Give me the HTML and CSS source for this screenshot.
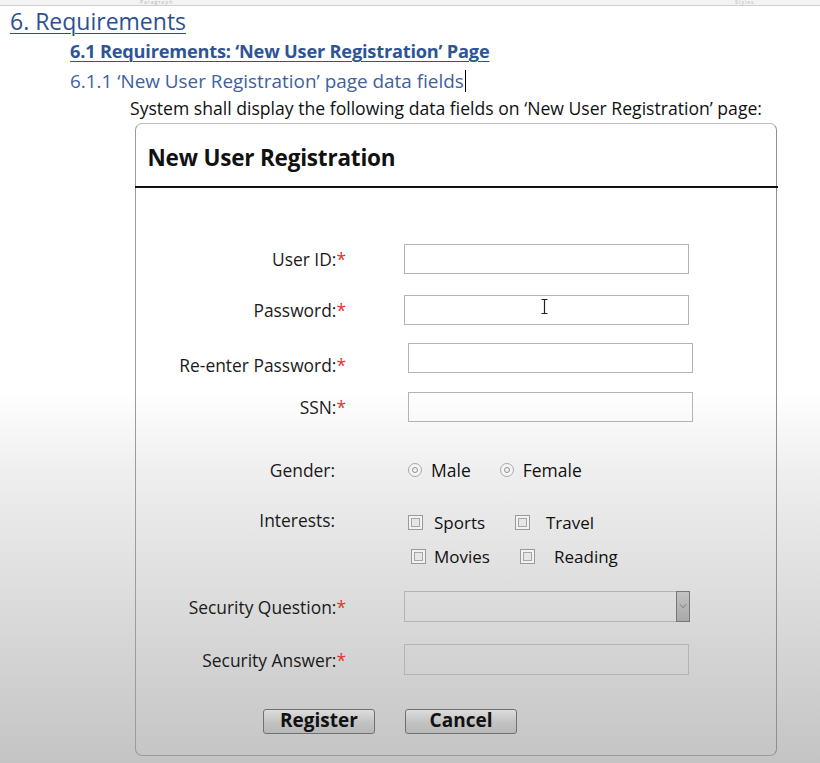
FILE: index.html
```html
<!DOCTYPE html>
<html>
<head>
<meta charset="utf-8">
<link rel="stylesheet" href="styles.css">
</head>
<body>
<div class="ribbon"><span class="rib-a">Paragraph</span><span class="rib-b">Styles</span></div>
<div class="doc">
  <h1 class="h1">6. Requirements</h1>
  <h2 class="h2">6.1 Requirements: ‘New User Registration’ Page</h2>
  <h3 class="h3">6.1.1 ‘New User Registration’ page data fields<span class="caret"></span></h3>
  <p class="para">System shall display the following data fields on ‘New User Registration’ page:</p>

  <div class="dialog">
    <div class="dlg-head">New User Registration</div>
    <div class="dlg-body">
      <div class="row r1">
        <div class="label">User ID:<span class="req">*</span></div>
        <div class="field"></div>
      </div>
      <div class="row r2">
        <div class="label">Password:<span class="req">*</span></div>
        <div class="field has-cursor">
          <svg class="ibeam" width="9" height="17" viewBox="0 0 9 17"><path d="M1.5 1.5h6M4.5 1.5v14M1.5 15.5h6" stroke="#222" stroke-width="1.2" fill="none"/></svg>
        </div>
      </div>
      <div class="row r3">
        <div class="label low">Re-enter Password:<span class="req">*</span></div>
        <div class="field shift"></div>
      </div>
      <div class="row r4">
        <div class="label">SSN:<span class="req">*</span></div>
        <div class="field shift"></div>
      </div>
      <div class="row r5">
        <div class="label opt">Gender:</div>
        <div class="options">
          <span class="opt-item"><span class="radio"></span>Male</span>
          <span class="opt-item f"><span class="radio"></span>Female</span>
        </div>
      </div>
      <div class="row-top r6">
        <div class="label opt">Interests:</div>
        <div class="checks">
          <span class="chk c1"><span class="box"></span><span class="t">Sports</span></span>
          <span class="chk c2"><span class="box"></span><span class="t">Travel</span></span>
          <span class="chk c3"><span class="box"></span><span class="t">Movies</span></span>
          <span class="chk c4"><span class="box"></span><span class="t">Reading</span></span>
        </div>
      </div>
      <div class="row r7">
        <div class="label">Security Question:<span class="req">*</span></div>
        <div class="field select"><span class="sel-btn"><svg width="9" height="6" viewBox="0 0 9 6"><path d="M1 1l3.5 4 3.5-4" stroke="#777" stroke-width="1" fill="none"/></svg></span></div>
      </div>
      <div class="row r8">
        <div class="label">Security Answer:<span class="req">*</span></div>
        <div class="field"></div>
      </div>
      <div class="buttons">
        <span class="btn reg">Register</span>
        <span class="btn">Cancel</span>
      </div>
    </div>
  </div>
</div>
</body>
</html>
```

FILE: styles.css
```css
html, body {
  margin: 0;
  padding: 0;
}
body {
  width: 820px;
  height: 763px;
  overflow: hidden;
  font-family: "Open Sans", Lato, sans-serif;
  background: linear-gradient(to bottom, #ffffff 0px, #ffffff 390px, #efefef 470px, #dcdcdc 600px, #c4c4c4 763px);
  color: #1e1e1e;
}
.ribbon {
  height: 5px;
  background: #f3f3f3;
  border-bottom: 1px solid #cfcfcf;
  position: relative;
  font-size: 5px;
  color: #b5b5b5;
  line-height: 5px;
}
.rib-a { position: absolute; left: 140px; top: 0; letter-spacing: 1px; }
.rib-b { position: absolute; left: 735px; top: 0; letter-spacing: 1px; }

.h1 {
  margin: 1px 0 0 10px;
  font-size: 23px;
  font-weight: 400;
  line-height: 28px;
  color: #2c5191;
  text-decoration: underline;
  text-decoration-thickness: 1px;
  text-underline-offset: 3px;
}
.h2 {
  margin: 4px 0 0 70px;
  font-size: 18.2px;
  font-weight: 700;
  line-height: 24px;
  color: #2f5496;
  text-decoration: underline;
  text-decoration-thickness: 1px;
  text-underline-offset: 3px;
  letter-spacing: -0.2px;
}
.h3 {
  margin: 6px 0 0 70px;
  font-size: 18.9px;
  font-weight: 400;
  line-height: 24px;
  color: #3e5fa0;
  display: flex;
  align-items: center;
}
.caret {
  display: inline-block;
  width: 1px;
  height: 22px;
  background: #000;
  margin-left: 1px;
}
.para {
  margin: 3px 0 0 130px;
  font-size: 17.6px;
  line-height: 24px;
  color: #111;
}

.dialog {
  margin: 3px 0 0 135px;
  width: 642px;
  height: 633px;
  border: 1.5px solid #9c9c9c;
  border-top-color: #bdbdbd;
  border-right-color: #8f8f8f;
  border-radius: 7px;
  box-sizing: border-box;
}
.dlg-head {
  height: 64px;
  box-sizing: border-box;
  padding: 20px 0 0 13px;
  font-size: 22.5px;
  font-weight: 700;
  line-height: 28px;
  color: #111;
  border-bottom: 2px solid #111;
  margin: 0 -1.5px;
  letter-spacing: -0.2px;
}
.dlg-body {
  padding-top: 56px;
  font-size: 17.4px;
  color: #1a1a1a;
}
.row {
  display: flex;
  align-items: center;
  height: 30px;
}
.row-top {
  display: flex;
  align-items: flex-start;
}
.label {
  width: 210px;
  text-align: right;
  flex-shrink: 0;
  white-space: nowrap;
}
.label.opt { padding-right: 11px; box-sizing: border-box; line-height: 24px; }
.label.low { position: relative; top: 7px; }
.req { color: #e4322f; }
.field {
  margin-left: 58px;
  width: 285px;
  height: 30px;
  box-sizing: border-box;
  border: 1.5px solid #b4b4b4;
  background: transparent;
  position: relative;
}
.field.shift { margin-left: 62px; }
.ibeam { position: absolute; left: 135px; top: 2px; }

.r2 { margin-top: 21px; }
.r3 { margin-top: 18px; }
.r4 { margin-top: 19px; }
.r5 { margin-top: 36px; height: 24px; }
.r6 { margin-top: 26px; }
.r7 { margin-top: 23px; height: 31px; }
.r7 .field { height: 31px; }
.r8 { margin-top: 22px; height: 31px; }
.r8 .field { height: 31px; }

.options {
  margin-left: 62px;
  display: flex;
  font-size: 17.5px;
  color: #111;
}
.opt-item { display: inline-flex; align-items: center; }
.opt-item.f { margin-left: 29px; }
.radio {
  width: 14px;
  height: 14px;
  box-sizing: border-box;
  border: 1.5px solid #a8a8a8;
  border-radius: 50%;
  margin-right: 9px;
  display: inline-flex;
  align-items: center;
  justify-content: center;
  background: #f4f4f4;
}
.radio::after {
  content: "";
  width: 6px;
  height: 6px;
  box-sizing: border-box;
  border: 1.5px solid #8e8e8e;
  border-radius: 50%;
}

.checks {
  margin-left: 62px;
  display: grid;
  grid-template-columns: 107px auto;
  row-gap: 12px;
  font-size: 17px;
  color: #111;
}
.chk { display: inline-flex; align-items: center; height: 24px; }
.chk .box {
  width: 15px;
  height: 15px;
  box-sizing: border-box;
  border: 1.5px solid #9a9a9a;
  background: #f2f2f2;
  display: inline-flex;
  align-items: center;
  justify-content: center;
}
.chk .box::after {
  content: "";
  width: 9px;
  height: 9px;
  box-sizing: border-box;
  border: 1px solid #a6a6a6;
  background: #e6e6e6;
}
.c1 .t { margin-left: 11px; }
.c2 .t { margin-left: 16px; }
.c3 { margin-left: 3px; }
.c3 .t { margin-left: 8px; }
.c4 { margin-left: 5px; }
.c4 .t { margin-left: 19px; }
.chk.c1, .chk.c2 { position: relative; top: 2px; }

.sel-btn {
  position: absolute;
  right: -1.5px;
  top: -1.5px;
  width: 14px;
  height: 31px;
  box-sizing: border-box;
  border: 1.5px solid #777;
  background: linear-gradient(to bottom, #c2c2c2, #a9a9a9);
  display: flex;
  align-items: center;
  justify-content: center;
}
.sel-btn svg { width: 8px; height: 6px; }

.buttons {
  margin-top: 34px;
  margin-left: 127px;
  display: flex;
  gap: 30px;
}
.btn {
  width: 112px;
  height: 25px;
  box-sizing: border-box;
  border: 1.5px solid #707070;
  border-radius: 3px;
  background: linear-gradient(to bottom, #dddddd, #c2c2c2 55%, #b8b8b8);
  font-size: 19px;
  font-weight: 700;
  color: #111;
  text-align: center;
  line-height: 21px;
}
```
